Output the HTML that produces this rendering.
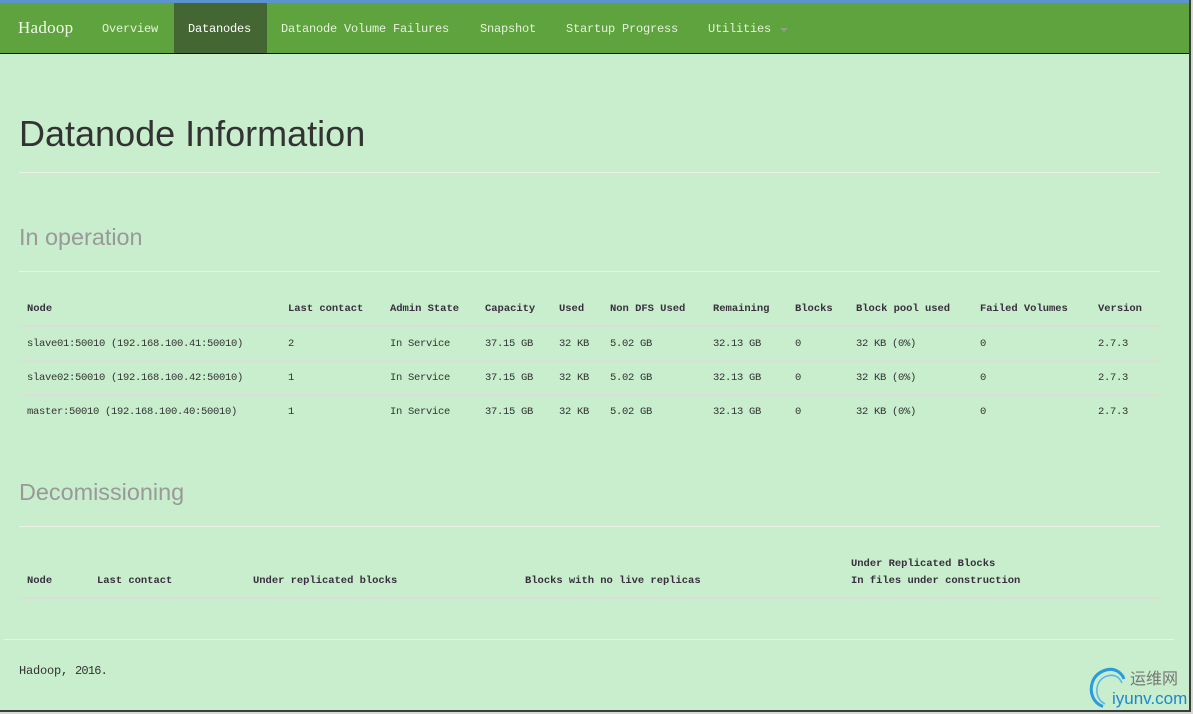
<!DOCTYPE html>
<html lang="en">
<head>
<meta charset="utf-8">
<title>Datanode Information</title>
<style>
html,body{margin:0;padding:0}
body{width:1193px;height:714px;position:relative;overflow:hidden;background:#c8eecd;font-family:"Liberation Mono",monospace;color:#333}
div,span.a{position:absolute}
.l{white-space:pre;position:absolute;line-height:16px;height:16px}
.n{color:#e4f2dc;font-size:12px;letter-spacing:-.2px;top:21px}
.h{font-weight:bold;font-size:10.5px;letter-spacing:-.03px;color:#3a2f3f;top:301px}
.d{font-size:10.5px;letter-spacing:-.3px}
.s{font-family:"Liberation Sans",sans-serif;font-size:23.4px;color:#999;line-height:30px;height:30px}
.r{position:absolute;left:19px;width:1141px;background:#eaf3e6;height:1px}
.g{position:absolute;left:19px;width:1141px;background:#dadfd8;height:2px}
</style>
</head>
<body>
<div style="left:0;top:0;width:1189px;height:3px;background:#5b94cc"></div>
<div style="left:0;top:3px;width:1189px;height:50px;background:#5fa33e"></div>
<div style="left:0;top:53px;width:1189px;height:1px;background:#111"></div>
<div style="left:174px;top:3px;width:93px;height:50px;background:#446633"></div>

<span class="l" style="left:18px;top:20px;font-family:'Liberation Serif',serif;font-size:17px;letter-spacing:.25px;color:#f2f8ee">Hadoop</span>
<span class="l n" style="left:102px">Overview</span>
<span class="l n" style="left:188px;color:#fff">Datanodes</span>
<span class="l n" style="left:281px">Datanode Volume Failures</span>
<span class="l n" style="left:480px">Snapshot</span>
<span class="l n" style="left:566px">Startup Progress</span>
<span class="l n" style="left:708px">Utilities</span>
<div style="left:780px;top:28px;width:0;height:0;border-left:4px solid transparent;border-right:4px solid transparent;border-top:4px solid #8f9f88"></div>

<span class="l" style="left:19px;top:113px;height:42px;line-height:42px;font-family:'Liberation Sans',sans-serif;font-size:36px;color:#333">Datanode Information</span>
<div class="r" style="top:172px"></div>
<span class="l s" style="left:19px;top:222px">In operation</span>
<div class="r" style="top:271px"></div>

<span class="l h" style="left:27px">Node</span>
<span class="l h" style="left:288px">Last contact</span>
<span class="l h" style="left:390px">Admin State</span>
<span class="l h" style="left:485px">Capacity</span>
<span class="l h" style="left:559px">Used</span>
<span class="l h" style="left:610px">Non DFS Used</span>
<span class="l h" style="left:713px">Remaining</span>
<span class="l h" style="left:795px">Blocks</span>
<span class="l h" style="left:856px">Block pool used</span>
<span class="l h" style="left:980px">Failed Volumes</span>
<span class="l h" style="left:1098px">Version</span>
<div class="g" style="top:325px"></div>

<span class="l d" style="top:336px;left:27px">slave01:50010 (192.168.100.41:50010)</span>
<span class="l d" style="top:336px;left:288px">2</span>
<span class="l d" style="top:336px;left:390px">In Service</span>
<span class="l d" style="top:336px;left:485px">37.15 GB</span>
<span class="l d" style="top:336px;left:559px">32 KB</span>
<span class="l d" style="top:336px;left:610px">5.02 GB</span>
<span class="l d" style="top:336px;left:713px">32.13 GB</span>
<span class="l d" style="top:336px;left:795px">0</span>
<span class="l d" style="top:336px;left:856px">32 KB (0%)</span>
<span class="l d" style="top:336px;left:980px">0</span>
<span class="l d" style="top:336px;left:1098px">2.7.3</span>
<div class="g" style="top:360px"></div>

<span class="l d" style="top:370px;left:27px">slave02:50010 (192.168.100.42:50010)</span>
<span class="l d" style="top:370px;left:288px">1</span>
<span class="l d" style="top:370px;left:390px">In Service</span>
<span class="l d" style="top:370px;left:485px">37.15 GB</span>
<span class="l d" style="top:370px;left:559px">32 KB</span>
<span class="l d" style="top:370px;left:610px">5.02 GB</span>
<span class="l d" style="top:370px;left:713px">32.13 GB</span>
<span class="l d" style="top:370px;left:795px">0</span>
<span class="l d" style="top:370px;left:856px">32 KB (0%)</span>
<span class="l d" style="top:370px;left:980px">0</span>
<span class="l d" style="top:370px;left:1098px">2.7.3</span>
<div class="g" style="top:394px"></div>

<span class="l d" style="top:404px;left:27px">master:50010 (192.168.100.40:50010)</span>
<span class="l d" style="top:404px;left:288px">1</span>
<span class="l d" style="top:404px;left:390px">In Service</span>
<span class="l d" style="top:404px;left:485px">37.15 GB</span>
<span class="l d" style="top:404px;left:559px">32 KB</span>
<span class="l d" style="top:404px;left:610px">5.02 GB</span>
<span class="l d" style="top:404px;left:713px">32.13 GB</span>
<span class="l d" style="top:404px;left:795px">0</span>
<span class="l d" style="top:404px;left:856px">32 KB (0%)</span>
<span class="l d" style="top:404px;left:980px">0</span>
<span class="l d" style="top:404px;left:1098px">2.7.3</span>

<span class="l s" style="left:19px;top:477px">Decomissioning</span>
<div class="r" style="top:526px"></div>

<span class="l h" style="left:27px;top:573px">Node</span>
<span class="l h" style="left:97px;top:573px">Last contact</span>
<span class="l h" style="left:253px;top:573px">Under replicated blocks</span>
<span class="l h" style="left:525px;top:573px">Blocks with no live replicas</span>
<span class="l h" style="left:851px;top:556px">Under Replicated Blocks</span>
<span class="l h" style="left:851px;top:573px">In files under construction</span>
<div class="g" style="top:597px"></div>

<div style="left:4px;top:639px;width:1170px;height:1px;background:#eaf3e6"></div>
<span class="l" style="left:19px;top:663px;font-size:12px;letter-spacing:-.2px;color:#333">Hadoop, <span style="letter-spacing:-.8px">2016.</span></span>

<svg width="50" height="46" viewBox="0 0 50 46" style="position:absolute;left:1085px;top:664px">
<path d="M18 42.5C8 39 4 28 7.500 18C11 8 24 2 33 7.500C36 9.500 38 12 39 15" fill="none" stroke="#2a9bdc" stroke-width="3"/>
<path d="M20 40C12 36 10 27 13.500 19C17 12 27 9 33 13.500C35 15 36 17 37 19" fill="none" stroke="#58b6e6" stroke-width="1.500"/>
</svg>
<span class="l" style="left:1130px;top:672px;font-family:'Liberation Sans','Noto Sans CJK SC',sans-serif;font-size:16px;color:#777">运维网</span>
<span class="l" style="left:1112px;top:691px;font-family:'Liberation Sans',sans-serif;font-size:17px;color:#1c86d0">iyunv.com</span>

<div style="left:1189px;top:0;width:2px;height:711px;background:#3a3f3c"></div>
<div style="left:1191px;top:0;width:2px;height:714px;background:#d8d8d8"></div>
<div style="left:0;top:710px;width:1191px;height:2px;background:#3a3f3c"></div>
<div style="left:0;top:712px;width:1193px;height:2px;background:#d8d8d8"></div>
</body>
</html>
